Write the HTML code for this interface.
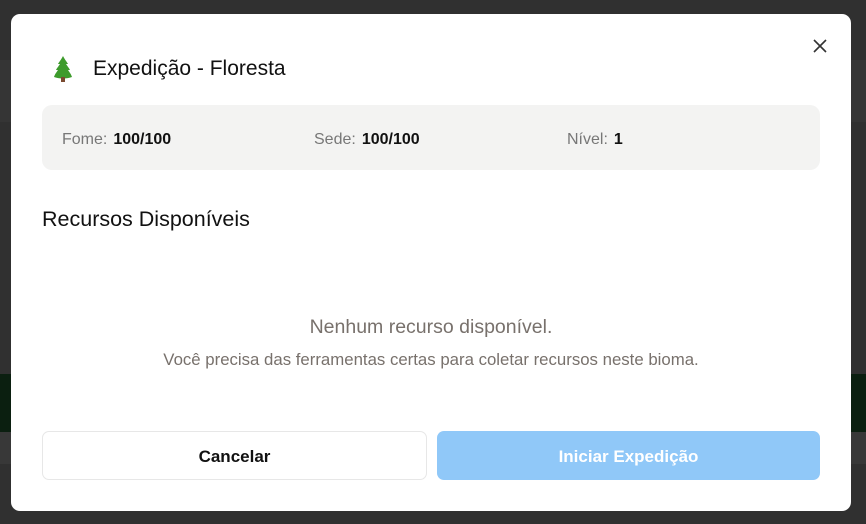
<!DOCTYPE html>
<html><head><meta charset="utf-8"><style>
*{box-sizing:border-box;margin:0;padding:0}
body{width:866px;height:524px;overflow:hidden;background:#303030;font-family:"Liberation Sans",sans-serif;position:relative}
.bg1{position:absolute;left:0;top:60px;width:866px;height:62px;background:#353535}
.bg2{position:absolute;left:0;top:374px;width:866px;height:58px;background:#0b1f10}
.bg3{position:absolute;left:0;top:432px;width:866px;height:32px;background:#383838}
.modal{position:absolute;left:11px;top:14px;width:840px;height:497px;background:#fff;border-radius:9px}
.x{position:absolute;left:802px;top:25px}
.tree{position:absolute;left:40px;top:41px}
.title{position:absolute;left:82px;top:43px;font-size:21px;color:#111;font-weight:500}
.stats{position:absolute;left:31px;top:91px;width:778px;height:65px;background:#f3f3f2;border-radius:10px;font-size:16px}
.stats span{position:absolute;top:26px;color:#777}
.stats b{color:#111;font-weight:bold;margin-left:6px}
.h{position:absolute;left:31px;top:193px;font-size:21.5px;color:#111;font-weight:500}
.e1{position:absolute;left:0;width:840px;text-align:center;top:302px;font-size:19.5px;color:#78716c}
.e2{position:absolute;left:0;width:840px;text-align:center;top:336px;font-size:16.8px;color:#78716c}
.btn{position:absolute;top:417px;height:49px;border-radius:7px;font-size:17px;font-weight:bold;display:flex;align-items:center;justify-content:center;padding-top:3px}
.c{left:31px;width:385px;border:1px solid #e7e7e7;color:#111}
.s{left:426px;width:383px;background:#90c8f8;color:#fff}
</style></head><body>
<div class="bg1"></div><div class="bg2"></div><div class="bg3"></div>
<div class="modal">
<svg class="x" width="14" height="14" viewBox="0 0 14 14"><path d="M1 1L13 13M13 1L1 13" stroke="#333" stroke-width="1.6"/></svg>
<svg class="tree" width="24" height="29" viewBox="0 0 24 29"><path d="M12 1 C10 5 8 7 7 9 L9 9 C7 12 6 13 5 15 L7 15 C5 18 4 19 3 22 C8 24 16 24 21 22 C20 19 19 18 17 15 L19 15 C18 13 17 12 15 9 L17 9 C16 7 14 5 12 1 Z" fill="#3d9b2c"/><rect x="10" y="22" width="4" height="5" fill="#7a4a30"/></svg>
<div class="title">Expedição - Floresta</div>
<div class="stats">
<span style="left:20px">Fome:<b>100/100</b></span>
<span style="left:272px">Sede:<b>100/100</b></span>
<span style="left:525px">Nível:<b>1</b></span>
</div>
<div class="h">Recursos Disponíveis</div>
<div class="e1">Nenhum recurso disponível.</div>
<div class="e2">Você precisa das ferramentas certas para coletar recursos neste bioma.</div>
<div class="btn c">Cancelar</div>
<div class="btn s">Iniciar Expedição</div>
</div>
</body></html>
